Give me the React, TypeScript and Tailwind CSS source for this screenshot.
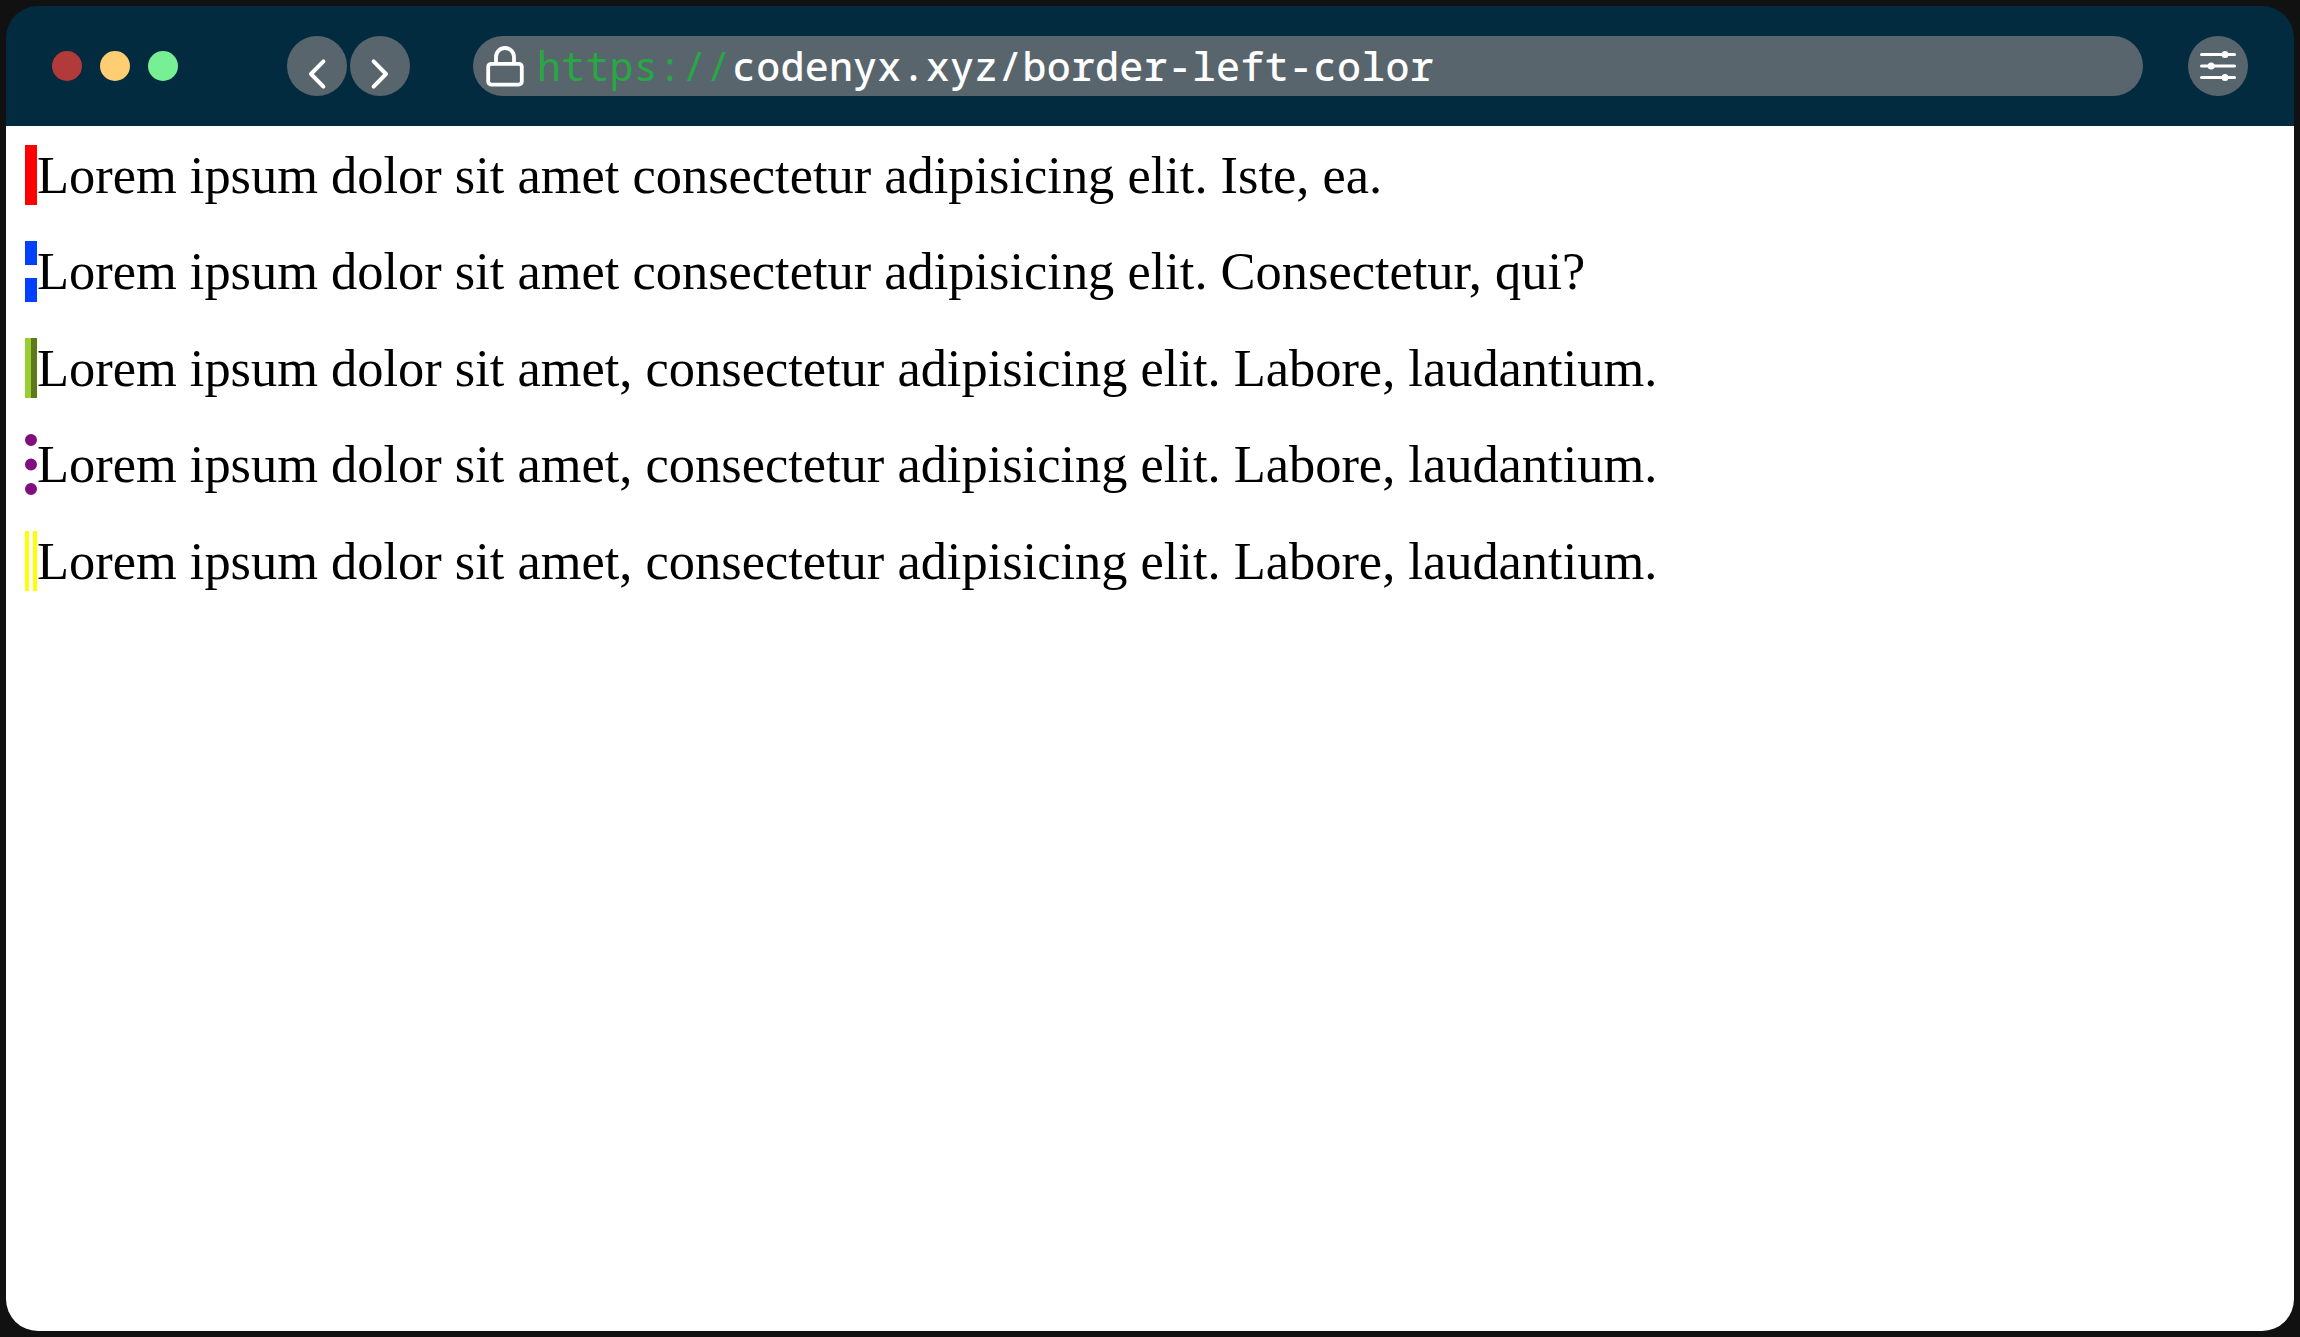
import React from "react";

const rows = [
  { text: "Lorem ipsum dolor sit amet consectetur adipisicing elit. Iste, ea.", border: "border-solid border-l-[#ff0000]" },
  { text: "Lorem ipsum dolor sit amet consectetur adipisicing elit. Consectetur, qui?", border: "border-dashed border-l-[#0040ff]" },
  { text: "Lorem ipsum dolor sit amet, consectetur adipisicing elit. Labore, laudantium.", border: "[border-left-style:ridge] border-l-[#9acd32]" },
  { text: "Lorem ipsum dolor sit amet, consectetur adipisicing elit. Labore, laudantium.", border: "border-dotted border-l-[#800e80]" },
  { text: "Lorem ipsum dolor sit amet, consectetur adipisicing elit. Labore, laudantium.", border: "border-double border-l-[#ffff00]" },
];

function Chevron({ d }: { d: string }) {
  return (
    <div className="size-[60px] rounded-full bg-[#58656d]">
      <svg viewBox="0 0 60 60" className="size-full" fill="none" stroke="#fff" strokeWidth="4" strokeLinecap="round" strokeLinejoin="round">
        <path d={d} />
      </svg>
    </div>
  );
}

export default function App() {
  return (
    <div className="h-screen overflow-hidden bg-[#111111] p-1.5">
      <div className="flex h-full flex-col">
        <header className="flex h-[120px] shrink-0 items-center rounded-t-[32px] bg-[#022b40] px-[46px]">
          <div className="flex gap-[18px]">
            <span className="size-[30px] rounded-full bg-[#b33a3a]" />
            <span className="size-[30px] rounded-full bg-[#ffce72]" />
            <span className="size-[30px] rounded-full bg-[#76ef95]" />
          </div>
          <div className="ml-[109px] flex gap-[3px]">
            <Chevron d="M36.4 25.4 24 38l12.4 12.6" />
            <Chevron d="M23.6 25.4 36 38 23.6 50.6" />
          </div>
          <div className="ml-[63px] flex h-[60px] grow items-center rounded-full bg-[#58656d] pl-3">
            <svg viewBox="0 0 40 44" className="h-11 w-10 shrink-0" fill="none" stroke="#fff" strokeWidth="3.8">
              <rect x="3.2" y="19.8" width="33.6" height="20.8" rx="3" />
              <path d="M11 19.8V13a9 9 0 0 1 18 0v6.8" />
            </svg>
            <p className="ml-3 font-['Noto_Sans_Mono','DejaVu_Sans_Mono',monospace] text-[40px] leading-[60px] font-medium tracking-[0.2px] whitespace-pre text-white">
              <span className="mr-[1.5px] font-normal text-[#28a745]">https://</span>codenyx.xyz/border-left-color
            </p>
          </div>
          <div className="ml-[45px] size-[60px] rounded-full bg-[#58656d]">
            <svg viewBox="0 0 60 60" className="size-full" stroke="#fff" strokeWidth="3" strokeLinecap="round" fill="none">
              <path d="M13.5 18.4h33M13.5 30h33M13.5 41.6h33" />
              <g fill="#fff" stroke="none">
                <circle cx="37" cy="18.4" r="3.5" />
                <circle cx="23.2" cy="30" r="3.5" />
                <circle cx="37" cy="41.6" r="3.5" />
              </g>
            </svg>
          </div>
        </header>
        <main className="flex grow flex-col gap-[35.9px] rounded-b-[32px] bg-white pt-[18.9px] pl-[19px] font-['Liberation_Serif',serif] text-[52.43px] text-black">
          {rows.map((r, i) => (
            <p key={i} className={`h-[60.6px] border-l-[12px] leading-[60.6px] whitespace-nowrap ${r.border}`}>
              {r.text}
            </p>
          ))}
        </main>
      </div>
    </div>
  );
}
